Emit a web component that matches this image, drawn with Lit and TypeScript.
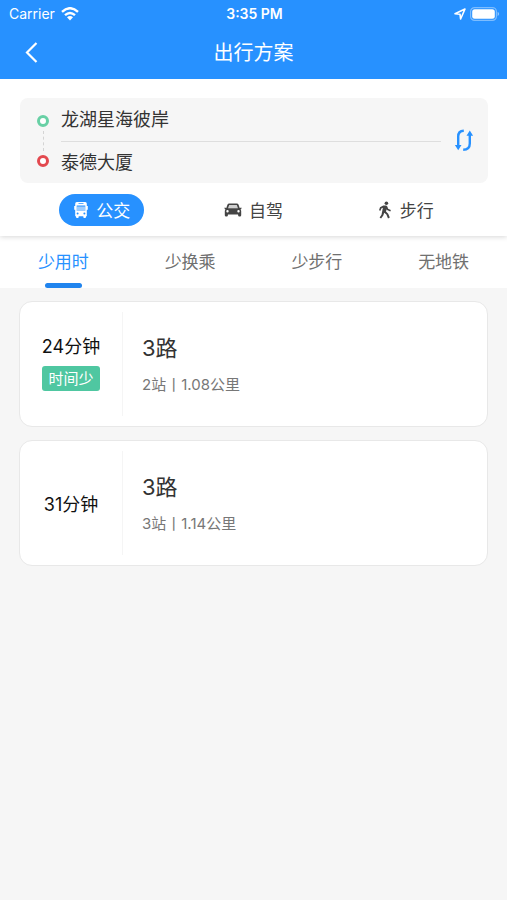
import { LitElement, html, css } from "lit";
import { customElement, state } from "lit/decorators.js";
import { classMap } from "lit/directives/class-map.js";

interface Route {
  minutes: number;
  tag?: string;
  line: string;
  detail: string;
}

const busIcon = html`<svg width="16" height="18" viewBox="0 0 16 18" aria-hidden="true">
  <path fill="currentColor" fill-rule="evenodd" d="M3.800 1h8.400q1.600 0 1.600 1.800V5h1v3.800h-1v6.400h-.8v.8q0 1-1 1h-.7q-1 0-1-1v-.8H5.700v.8q0 1-1 1H4q-1 0-1-1v-.8h-.8V8.800h-1V5h1V2.800Q2.200 1 3.800 1ZM5.500 2.200v.9h5v-.9ZM3.700 4.500v5.200h8.600V4.500ZM4.600 11.400a1 1 0 1 0 0 2 1 1 0 0 0 0-2Zm6.800 0a1 1 0 1 0 0 2 1 1 0 0 0 0-2Z"/>
  <path fill="currentColor" opacity=".55" d="M3.700 5.500h8.600v4.200H3.700Z"/>
</svg>`;

const carIcon = html`<svg width="18" height="16" viewBox="0 0 18 16" aria-hidden="true">
  <path fill="currentColor" fill-rule="evenodd" d="M5.400 1.500h7.200q1.600 0 2 1.300L15.700 6l1.700-.4v1.300l-.9.500q.7.800.7 1.800v4q0 1.300-1.300 1.300h-.5q-1.300 0-1.300-1.300v-.6H3.900v.6q0 1.300-1.300 1.300h-.5Q.8 14.500.8 13.200v-4q0-1 .7-1.800l-.9-.5V5.600L2.300 6l1.100-3.200q.4-1.300 2-1.300ZM5.200 2.900 4.100 6.200h9.800l-1.100-3.300ZM3.500 8a1.200 1.200 0 1 0 0 2.400 1.200 1.200 0 0 0 0-2.400Zm11 0a1.200 1.200 0 1 0 0 2.400 1.200 1.200 0 0 0 0-2.400Z"/>
  <path fill="currentColor" opacity=".25" d="M5.200 2.900h7.600l1.100 3.300H4.100Z"/>
</svg>`;

const walkIcon = html`<svg width="16" height="18" viewBox="-1 0 16 18" aria-hidden="true">
  <circle cx="8.400" cy="2.300" r="1.800" fill="currentColor"/>
  <path fill="currentColor" d="M5.300 4.600h2.900l1.100.9.8 2.200 2.800 1.400-.6 1.400-3.300-1.500-.4-.8-.6 2.300 2.200 2.200 1.600 3.900-1.800.8-1.600-3.900-2.200-1.700-.9 2.800-2.200 2.900-1.500-1.100 1.900-2.700L4.900 6.800l-1.600.8-.8 2.200-1.500-.5 1-3Z"/>
</svg>`;

const swapIcon = html`<svg width="20" height="24" viewBox="0 0 20 24" aria-hidden="true">
  <g fill="none" stroke="currentColor" stroke-width="2.400">
    <path d="M9.800 1.700Q4.200 1.900 4.200 7.500V17"/>
    <path d="M9.200 20.800Q15.800 20.600 15.800 14.500V6"/>
  </g>
  <path fill="currentColor" d="M.9 16h6.600l-3.300 5.200ZM12.500 6.700h6.600l-3.300-5.200Z"/>
</svg>`;

@customElement("app-root")
export class AppRoot extends LitElement {
  @state() private mode = 0;
  @state() private filter = 0;
  @state() private stops = ["龙湖星海彼岸", "泰德大厦"];

  private modes = [
    { label: "公交", icon: busIcon },
    { label: "自驾", icon: carIcon },
    { label: "步行", icon: walkIcon },
  ];
  private filters = ["少用时", "少换乘", "少步行", "无地铁"];
  private routes: Route[] = [
    { minutes: 24, tag: "时间少", line: "3路", detail: "2站丨1.08公里" },
    { minutes: 31, line: "3路", detail: "3站丨1.14公里" },
  ];

  static styles = css`
    :host {
      display: block;
      min-height: 100vh;
      background: #f6f6f6;
      color: #333;
      font-family: Inter, "Noto Sans CJK SC", sans-serif;
    }
    * { box-sizing: border-box; }
    svg { display: block; flex: none; }
    button {
      border: 0;
      padding: 0;
      margin: 0;
      background: none;
      color: inherit;
      font: inherit;
      cursor: pointer;
    }
    h1, h2, p { margin: 0; font-weight: 400; }
    .top { background: #2791ff; color: #fff; }
    .status, .nav {
      display: grid;
      grid-template-columns: 1fr auto 1fr;
      align-items: center;
    }
    .status { height: 27px; padding: 0 7px 0 9px; font-size: 14px; }
    .carrier { display: flex; align-items: center; gap: 6px; }
    .clock { font-size: 14px; font-weight: 600; }
    .indicators { display: flex; align-items: center; justify-content: flex-end; gap: 4px; }
    .nav { height: 52px; padding: 0 20px; }
    .nav h1 { font-size: 20px; line-height: 28px; }
    .back { width: 24px; height: 28px; display: grid; place-items: center; }
    .search { background: #fff; padding: 19px 19px 0 20px; }
    .panel {
      display: grid;
      grid-template-columns: 12px 1fr 20px;
      align-items: center;
      column-gap: 12px;
      padding: 0 14px 0 17px;
      height: 85px;
      border-radius: 8px;
      background: #f6f6f6;
    }
    .rail { display: flex; flex-direction: column; align-items: center; gap: 4px; }
    .ring { width: 12px; height: 12px; border: 3px solid #68d0a5; border-radius: 50%; background: #fff; }
    .ring.end { border-color: #e3494f; }
    .dots { height: 20px; border-left: 1px dashed #d4d4d4; }
    .stops { display: flex; flex-direction: column; margin-right: 1px; }
    .stop { height: 42px; font-size: 18px; line-height: 42px; text-align: left; }
    .stop + .stop { border-top: 1px solid #dedede; }
    .swap { color: #2791ff; }
    .modes {
      position: relative;
      display: grid;
      grid-template-columns: repeat(3, 1fr);
      justify-items: center;
      align-items: center;
      height: 53px;
      padding: 0 26px;
      background: #fff;
      box-shadow: 0 1px 5px rgba(0, 0, 0, 0.16);
      clip-path: inset(0 0 -8px 0);
    }
    .mode {
      display: flex;
      align-items: center;
      justify-content: center;
      gap: 7px;
      height: 32px;
      padding: 0 14px;
      border-radius: 16px;
      font-size: 17px;
      color: #444;
    }
    .mode.on { background: #2791ff; color: #fff; }
    .filters { display: grid; grid-template-columns: repeat(4, 1fr); height: 52px; background: #fff; }
    .filter {
      display: flex;
      flex-direction: column;
      align-items: center;
      justify-content: flex-end;
      gap: 8px;
      font-size: 17px;
      line-height: 26px;
      color: #707070;
    }
    .filter::after { content: ""; width: 37px; height: 5px; border-radius: 3px; }
    .filter.on { color: #2791ff; }
    .filter.on::after { background: #2084ee; }
    .routes {
      display: flex;
      flex-direction: column;
      gap: 13px;
      margin: 0;
      padding: 13px 19px;
      list-style: none;
    }
    .card {
      display: grid;
      grid-template-columns: 103px 1fr;
      align-items: center;
      height: 126px;
      border: 1px solid #e8e8e8;
      border-radius: 13px;
      background: #fff;
    }
    .time {
      display: flex;
      flex-direction: column;
      align-items: center;
      justify-content: center;
      gap: 5px;
      height: 104px;
      padding-top: 3px;
      border-right: 1px solid #f5f5f5;
      font-size: 18px;
      line-height: 28px;
      color: #111;
    }
    .tag {
      margin-bottom: 7px;
      padding: 0 6px;
      border-radius: 3px;
      background: #4fc7a1;
      color: #fff;
      font-size: 15px;
      line-height: 25px;
    }
    .info { padding-left: 19px; }
    .info h2 { font-size: 22px; line-height: 34px; }
    .info p { margin-top: 8px; font-size: 15px; line-height: 24px; color: #777; }
  `;

  render() {
    return html`
      <header class="top">
        <div class="status">
          <span class="carrier">Carrier
            <svg width="18" height="14" viewBox="0 0 18 14" aria-hidden="true">
              <g fill="none" stroke="#fff" stroke-width="2.400">
                <path d="M1 4.800Q9-2.400 17 4.800"/><path d="M4 8.200Q9 3.600 14 8.200"/>
              </g>
              <path fill="#fff" d="M6 10.200Q9 7.600 12 10.200L9 13.400Z"/>
            </svg>
          </span>
          <span class="clock">3:35 PM</span>
          <span class="indicators">
            <svg width="12" height="12" viewBox="0 0 12 12" aria-hidden="true">
              <path fill="none" stroke="#fff" stroke-width="1.600" stroke-linejoin="round" d="M1 5.800 11 1 6.600 11 6 6.200Z"/>
            </svg>
            <svg width="30" height="14" viewBox="0 0 30 14" aria-hidden="true">
              <rect x=".6" y=".6" width="25.800" height="12.800" rx="4" fill="none" stroke="#fff" stroke-opacity=".4" stroke-width="1.200"/>
              <rect x="2.200" y="2.200" width="22.600" height="9.600" rx="2.500" fill="#fff"/>
              <path fill="#fff" fill-opacity=".5" d="M27.600 4.800q3 2.200 0 4.400Z"/>
            </svg>
          </span>
        </div>
        <div class="nav">
          <button class="back" aria-label="返回">
            <svg width="14" height="22" viewBox="0 0 14 22" aria-hidden="true">
              <path fill="none" stroke="#fff" stroke-width="2.200" d="M11.500 1 2 10.500l9.500 9.500"/>
            </svg>
          </button>
          <h1>出行方案</h1>
        </div>
      </header>
      <main>
        <section class="search">
          <div class="panel">
            <div class="rail"><i class="ring"></i><i class="dots"></i><i class="ring end"></i></div>
            <div class="stops">${this.stops.map((s) => html`<button class="stop">${s}</button>`)}</div>
            <button class="swap" aria-label="交换起终点" @click=${() => (this.stops = [...this.stops].reverse())}>${swapIcon}</button>
          </div>
        </section>
        <nav class="modes">
          ${this.modes.map((m, i) => html`
            <button class=${classMap({ mode: true, on: i === this.mode })} @click=${() => (this.mode = i)}>${m.icon}<span>${m.label}</span></button>`)}
        </nav>
        <nav class="filters">
          ${this.filters.map((f, i) => html`
            <button class=${classMap({ filter: true, on: i === this.filter })} @click=${() => (this.filter = i)}>${f}</button>`)}
        </nav>
        <ul class="routes">
          ${this.routes.map((r) => html`
            <li class="card">
              <div class="time">
                <span>${r.minutes}分钟</span>
                ${r.tag ? html`<span class="tag">${r.tag}</span>` : null}
              </div>
              <div class="info"><h2>${r.line}</h2><p>${r.detail}</p></div>
            </li>`)}
        </ul>
      </main>
    `;
  }
}
